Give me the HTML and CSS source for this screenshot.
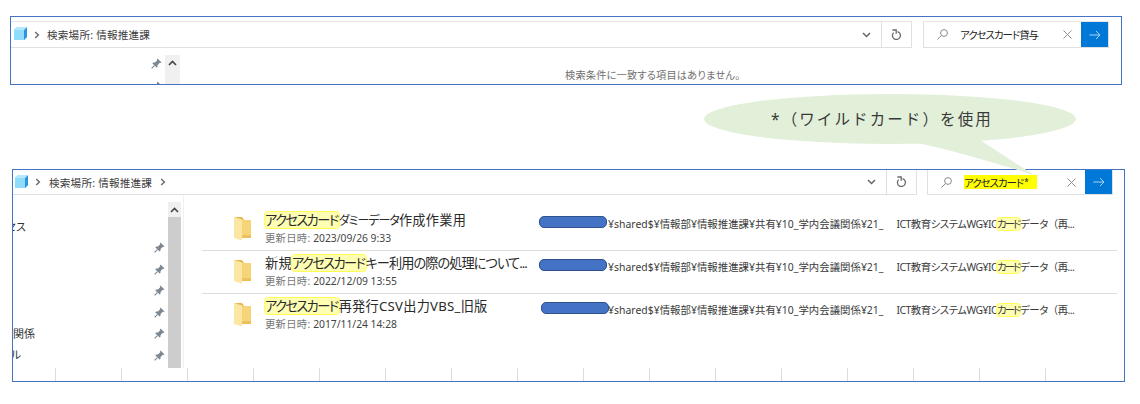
FILE: index.html
```
<!DOCTYPE html>
<html lang="ja">
<head>
<meta charset="utf-8">
<title>検索結果</title>
<link rel="stylesheet" href="styles.css">
</head>
<body>
<svg class="defs" width="0" height="0" aria-hidden="true">
  <symbol id="cube" viewBox="0 0 13 13">
    <path d="M0 3 3 0H13V10L10 13H0Z" fill="#5fc4f5"/>
    <path d="M0 3H10V13H0Z" fill="#8fdcfb"/>
    <path d="M10 3 13 0V10L10 13Z" fill="#2f93e0"/>
    <path d="M0 3 3 0H13L10 3Z" fill="#b5e8fd"/>
  </symbol>
  <symbol id="pin" viewBox="0 0 11 11">
    <path d="M6.5.5 10.5 4.5 9.6 5 8.8 4.8 6.6 7 6.4 9 5.6 9.6 1.4 5.4 2 4.6 4 4.4 6.2 2.2 6 1.4Z" fill="#7d8790"/>
    <path d="M3.4 7.6.6 10.4" stroke="#7d8790" stroke-width="1.1"/>
  </symbol>
  <symbol id="folder" viewBox="0 0 18 25">
    <path d="M1 1H8L10 4H17V22H1Z" fill="#e8b94a"/>
    <path d="M8 4H17V21H8Z" fill="#f6d578"/>
    <path d="M0 1 8 3.5V24.5L0 22Z" fill="#fbe6a4"/>
    <path d="M8 19H17V21.5H8Z" fill="#eec160"/>
  </symbol>
  <symbol id="chev-r" viewBox="0 0 6 8"><path d="M1.2 1 4.4 4 1.2 7" fill="none" stroke="#6a6a6a" stroke-width="1.4"/></symbol>
  <symbol id="chev-d" viewBox="0 0 9 6"><path d="M1 1 4.5 4.5 8 1" fill="none" stroke="#666" stroke-width="1.5"/></symbol>
  <symbol id="chev-u" viewBox="0 0 9 6"><path d="M1 5 4.5 1.5 8 5" fill="none" stroke="#444" stroke-width="1.6"/></symbol>
  <symbol id="refresh" viewBox="0 0 11 12"><path d="M6.5 2.6A4 4 0 1 1 2.6 3.6" fill="none" stroke="#6a6a6a" stroke-width="1.3"/><path d="M1.4 1H5.2V4.8" fill="none" stroke="#6a6a6a" stroke-width="1.3"/></symbol>
  <symbol id="search" viewBox="0 0 11 11"><circle cx="7" cy="4" r="3.4" fill="none" stroke="#8a8a8a"/><path d="M4.5 6.5.5 10.5" stroke="#8a8a8a"/></symbol>
  <symbol id="close" viewBox="0 0 9 9"><path d="M.5.5 8.5 8.5M8.5.5.5 8.5" stroke="#8f8f8f"/></symbol>
  <symbol id="arrow" viewBox="0 0 12 10"><path d="M.5 5H11M7 1 11 5 7 9" fill="none" stroke="#a9d4f5" stroke-width="1"/></symbol>
</svg>

<section class="panel panel-empty">
  <div class="toolbar">
    <div class="address">
      <svg class="cube"><use href="#cube"/></svg>
      <svg class="crumb"><use href="#chev-r"/></svg>
      <span class="place">検索場所: 情報推進課</span>
      <svg class="dropdown"><use href="#chev-d"/></svg>
      <div class="refresh"><svg class="refresh-icon"><use href="#refresh"/></svg></div>
    </div>
    <div class="searchbox">
      <svg class="search-icon"><use href="#search"/></svg>
      <span class="query">アクセスカード貸与</span>
      <svg class="close-icon"><use href="#close"/></svg>
      <div class="go"><svg class="arrow"><use href="#arrow"/></svg></div>
    </div>
  </div>
  <div class="body-empty">
    <div class="nav-empty">
      <svg class="pin"><use href="#pin"/></svg>
      <svg class="pin"><use href="#pin"/></svg>
    </div>
    <div class="scroll scroll-empty"><svg class="up"><use href="#chev-u"/></svg></div>
    <p class="message">検索条件に一致する項目はありません。</p>
  </div>
</section>

<div class="callout">
  <svg class="callout-shape" viewBox="0 0 380 84">
    <path d="M210 48 Q240 52 334 81 L280 46Z" fill="#e2efd9"/>
    <ellipse cx="190" cy="25" rx="186" ry="25" fill="#e2efd9"/>
  </svg>
  <span class="callout-text">*（ワイルドカード）を使用</span>
</div>

<section class="panel panel-results">
  <div class="toolbar">
    <div class="address">
      <svg class="cube"><use href="#cube"/></svg>
      <svg class="crumb"><use href="#chev-r"/></svg>
      <span class="place">検索場所: 情報推進課</span>
      <svg class="crumb crumb-end"><use href="#chev-r"/></svg>
      <svg class="dropdown"><use href="#chev-d"/></svg>
      <div class="refresh"><svg class="refresh-icon"><use href="#refresh"/></svg></div>
    </div>
    <div class="searchbox">
      <svg class="search-icon"><use href="#search"/></svg>
      <span class="query query-hit">アクセスカード<span class="star">*</span></span>
      <svg class="close-icon"><use href="#close"/></svg>
      <div class="go"><svg class="arrow"><use href="#arrow"/></svg></div>
    </div>
  </div>
  <div class="body-results">
    <div class="nav">
      <div class="nav-row nav-first"><span class="nav-clip"><span class="nav-label">クイックアクセス</span></span></div>
      <div class="nav-row"><svg class="pin"><use href="#pin"/></svg></div>
      <div class="nav-row"><svg class="pin"><use href="#pin"/></svg></div>
      <div class="nav-row"><svg class="pin"><use href="#pin"/></svg></div>
      <div class="nav-row"><svg class="pin"><use href="#pin"/></svg></div>
      <div class="nav-row"><span class="nav-clip nav-clip-wide"><span class="nav-label">学内会議関係</span></span><svg class="pin"><use href="#pin"/></svg></div>
      <div class="nav-row"><span class="nav-clip nav-clip-thin"><span class="nav-label">ファイル</span></span><svg class="pin"><use href="#pin"/></svg></div>
    </div>
    <div class="scroll scroll-results">
      <div class="scroll-btn"><svg class="up"><use href="#chev-u"/></svg></div>
      <div class="thumb"></div>
    </div>
    <div class="list">
      <article class="row">
        <svg class="folder"><use href="#folder"/></svg>
        <div class="name">
          <div class="title"><mark class="hl">アクセスカード</mark><span class="kana">ダミーデータ</span>作成作業用</div>
          <div class="date"><span class="date-label">更新日時:</span> 2023/09/26 9:33</div>
        </div>
        <div class="path"><span class="pill"></span>¥shared$¥情報部¥情報推進課¥共有¥10_学内会議関係¥21_<span class="path-gap"></span><span class="path-tail">ICT教育システムWG¥IC<mark class="hl hl-path">カード</mark>データ<span class="paren">（</span>再...</span></div>
      </article>
      <article class="row">
        <svg class="folder"><use href="#folder"/></svg>
        <div class="name">
          <div class="title">新規<mark class="hl">アクセスカード</mark><span class="title-rest">キー利用の際の処理について...</span></div>
          <div class="date"><span class="date-label">更新日時:</span> 2022/12/09 13:55</div>
        </div>
        <div class="path"><span class="pill"></span>¥shared$¥情報部¥情報推進課¥共有¥10_学内会議関係¥21_<span class="path-gap"></span><span class="path-tail">ICT教育システムWG¥IC<mark class="hl hl-path">カード</mark>データ<span class="paren">（</span>再...</span></div>
      </article>
      <article class="row">
        <svg class="folder"><use href="#folder"/></svg>
        <div class="name">
          <div class="title"><mark class="hl">アクセスカード</mark>再発行CSV出力VBS_旧版</div>
          <div class="date"><span class="date-label">更新日時:</span> 2017/11/24 14:28</div>
        </div>
        <div class="path"><span class="pill pill-shift"></span>¥shared$¥情報部¥情報推進課¥共有¥10_学内会議関係¥21_<span class="path-gap"></span><span class="path-tail">ICT教育システムWG¥IC<mark class="hl hl-path">カード</mark>データ<span class="paren">（</span>再...</span></div>
      </article>
    </div>
  </div>
  <div class="ticks">
    <span></span><span></span><span></span><span></span><span></span><span></span><span></span><span></span>
    <span></span><span></span><span></span><span></span><span></span><span></span><span></span><span></span>
  </div>
</section>
</body>
</html>
```

FILE: styles.css
```
* { box-sizing: border-box; }
html, body { margin: 0; padding: 0; }
body {
  position: relative;
  width: 1140px;
  height: 404px;
  overflow: hidden;
  background: #fff;
  color: #333;
  font-family: "Noto Sans", "Noto Sans CJK JP", sans-serif;
  font-feature-settings: "palt";
  padding-top: 16px;
}
.defs { position: absolute; }

.panel {
  display: flex;
  flex-direction: column;
  border: 1px solid #4472c4;
  background: #fff;
  overflow: hidden;
}
.panel-empty { margin-left: 10px; width: 1112px; height: 69px; }
.panel-results { margin: 84px 0 0 12px; width: 1113px; height: 213px; }

.toolbar { display: flex; flex: none; }
.panel-empty .toolbar { height: 31px; padding-top: 4px; padding-right: 12px; }
.panel-results .toolbar { height: 25px; padding-right: 11px; }

.address {
  display: flex;
  align-items: center;
  flex: 1;
  border-top: 1px solid #e6e6e6;
  border-bottom: 1.5px solid #e0e0e0;
  border-right: 1px solid #e0e0e0;
}
.panel-results .address { border-top: 0; margin-right: 10px; padding-left: 2px; }
.panel-empty .address { margin-right: 11px; padding-left: 3px; }

.cube { width: 13px; height: 13px; flex: none; margin-top: -2px; }
.crumb { width: 6px; height: 8px; flex: none; margin-left: 7px; }
.place { font-size: 10.6px; letter-spacing: .2px; margin-left: 8px; white-space: nowrap; color: #3c3c3c; }
.panel-empty .place { margin-left: 7px; }
.crumb-end { margin-left: 8px; }
.dropdown { width: 9px; height: 6px; margin-left: auto; margin-right: 10px; flex: none; }
.refresh {
  width: 30px;
  align-self: stretch;
  display: flex;
  align-items: center;
  justify-content: center;
  border-left: 1px solid #e0e0e0;
  flex: none;
}
.refresh-icon { width: 11px; height: 12px; }

.searchbox {
  display: flex;
  align-items: center;
  width: 186px;
  flex: none;
  border-top: 1px solid #e6e6e6;
  border-left: 1px solid #e0e0e0;
  border-bottom: 1.5px solid #e0e0e0;
  border-right: 1px solid #e0e0e0;
}
.panel-results .searchbox { border-top: 0; }
.search-icon { width: 11px; height: 11px; margin-left: 13px; flex: none; }
.query { font-size: 10.4px; margin-left: 12px; color: #222; white-space: nowrap; letter-spacing: -.95px; }
.query-hit {
  background: #ffff00;
  width: 73px;
  height: 14px;
  line-height: 14px;
  flex: none;
}
.star { font-size: 8px; vertical-align: 2px; margin-left: 1px; }
.close-icon { width: 9px; height: 9px; margin-left: auto; margin-right: 9px; flex: none; }
.go {
  width: 27px;
  align-self: stretch;
  background: #0078d7;
  display: flex;
  align-items: center;
  justify-content: center;
  flex: none;
}
.arrow { width: 12px; height: 10px; }

.body-empty { position: relative; display: flex; flex: 1; min-height: 0; }
.nav-empty {
  width: 154px;
  flex: none;
  display: flex;
  flex-direction: column;
  align-items: flex-end;
  padding: 10px 3px 0 0;
  gap: 12px;
}
.pin { width: 11px; height: 11px; flex: none; }
.scroll { flex: none; }
.scroll-empty {
  width: 15px;
  margin: 7px 0 0 0;
  background: #f0f0f0;
  display: flex;
  justify-content: center;
  padding-top: 5px;
}
.up { width: 9px; height: 6px; }
.message {
  margin: 0 0 0 385px;
  padding-top: 19px;
  font-size: 10.2px;
  letter-spacing: .2px;
  color: #707070;
  white-space: nowrap;
}

.callout {
  position: absolute;
  left: 700px;
  top: 94px;
  width: 380px;
  height: 84px;
}
.callout-shape { position: absolute; inset: 0; width: 380px; height: 84px; }
.callout-text {
  position: absolute;
  left: 71px;
  top: 14px;
  font-size: 15.5px;
  line-height: 22px;
  letter-spacing: 2.1px;
  font-feature-settings: normal;
  color: #3a3a3a;
  white-space: nowrap;
}

.body-results { display: flex; flex: none; height: 173px; }
.nav {
  width: 155px;
  flex: none;
  padding-top: 21px;
}
.nav-row {
  height: 21.5px;
  display: flex;
  align-items: center;
  justify-content: flex-end;
  padding-right: 3px;
  position: relative;
}
.nav-first { height: 21px; }
.nav-clip {
  position: absolute;
  left: 0;
  top: -1px;
  bottom: 1px;
  width: 13px;
  overflow: hidden;
  display: flex;
  justify-content: flex-end;
  align-items: center;
}
.nav-clip-wide { width: 22px; }
.nav-clip-thin { width: 8px; }
.nav-label { font-size: 11px; color: #333; white-space: nowrap; flex: none; }

.scroll-results {
  width: 16px;
  padding-top: 7px;
  padding-right: 2px;
  border-right: 1px solid #f0f0f0;
  display: flex;
  flex-direction: column;
}
.scroll-btn {
  height: 15px;
  background: #f0f0f0;
  display: flex;
  align-items: center;
  justify-content: center;
  flex: none;
}
.thumb { flex: 1; background: #cdcdcd; }

.list { flex: 1; padding: 13px 7px 0 18px; min-width: 0; }
.row {
  display: flex;
  height: 43px;
  border-bottom: 1px solid #dedede;
}
.row:last-child { border-bottom: 0; }
.folder { width: 18px; height: 25px; margin: 8px 0 0 32px; flex: none; }
.name { width: 274px; flex: none; margin-left: 13px; padding-top: 3px; }
.title {
  font-size: 13.2px;
  line-height: 18px;
  height: 18px;
  white-space: nowrap;
  color: #2a2a2a;
  letter-spacing: .25px;
}
.kana { font-size: 12px; letter-spacing: -1px; }
.title-rest { letter-spacing: -.95px; }
.date { font-size: 10.3px; line-height: 14px; margin-top: 2px; color: #444; white-space: nowrap; }
.date-label { color: #777; letter-spacing: .3px; }
.hl {
  display: inline-block;
  background: #ffffb4;
  color: inherit;
  border: 1px solid #ffff55;
  border-radius: 4px;
  margin: -1px;
  padding-right: 1px;
  line-height: 16px;
  height: 18px;
  letter-spacing: -1.55px;
}
.path {
  font-size: 10.4px;
  line-height: 14px;
  padding-top: 9px;
  color: #3a3a3a;
  white-space: nowrap;
  letter-spacing: .03px;
}
.path-tail { letter-spacing: -.5px; }
.paren { font-feature-settings: normal; }
.pill {
  display: inline-block;
  width: 68px;
  height: 12px;
  margin-right: 1px;
  vertical-align: -1px;
  transform: translateY(-1px);
  background: #4472c4;
  border: 1px solid #2f528f;
  border-radius: 5px;
}
.pill-shift { margin-left: 2px; margin-right: -1px; }
.path-gap { display: inline-block; width: 13px; }
.hl-path { height: 14px; line-height: 12px; margin: 0 -1px; letter-spacing: -2px; }

.ticks { display: flex; flex: 1; }
.ticks span {
  width: 66px;
  flex: none;
  border-right: 1px solid #dddddd;
}
.ticks span:first-child { width: 43px; }
```
